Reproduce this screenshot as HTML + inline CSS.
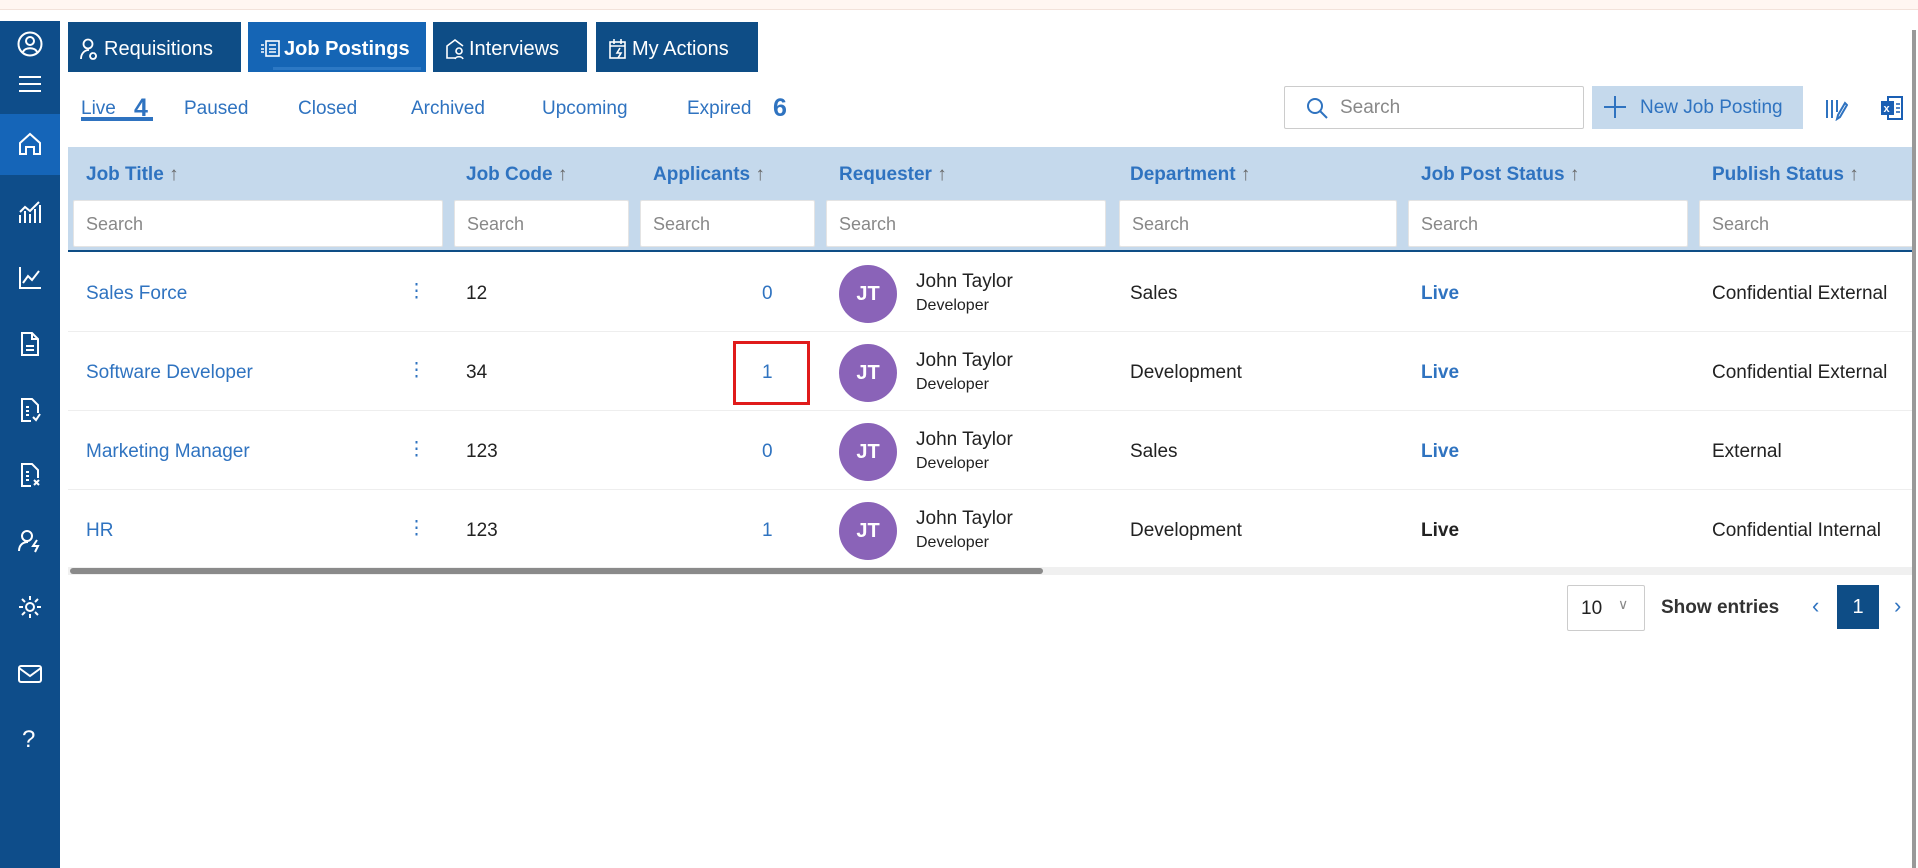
<!DOCTYPE html>
<html><head><meta charset="utf-8"><style>
*{box-sizing:border-box;margin:0;padding:0}
body{width:1918px;height:868px;overflow:hidden;background:#fff;font-family:"Liberation Sans",sans-serif;position:relative;color:#222}
.a{position:absolute}
.top{left:0;top:0;width:1918px;height:10px;background:#fff6f1;border-bottom:1px solid #f2e2da}
.side{left:0;top:21px;width:60px;height:847px;background:#0e4d8a}
.home{left:0;top:114px;width:60px;height:61px;background:#1565b8}
.ic{position:absolute;left:17px;width:26px;height:26px}
.tab{top:22px;height:50px;background:#0e4d86;color:#fff;font-size:20px;line-height:54px;padding-left:36px}
.tab svg{position:absolute;left:12px;top:16px}
.sub{top:98px;font-size:19px;color:#2f73c0}
.num{font-size:25px;font-weight:bold;color:#2f73c0;top:94px}
.band{left:68px;top:147px;width:1846px;height:105px;background:#c5d9ec;border-bottom:2px solid #0e4d86}
.hd{top:164px;font-size:19px;font-weight:bold;color:#2f73c0}
.hd span{color:#666;font-weight:normal}
.inp{top:200px;height:47px;background:#fff;border:1px solid #e4e4e4;border-radius:2px;font-size:18px;color:#888;padding:13px 12px}
.row{left:68px;width:1846px;border-bottom:1px solid #eee}
.c{font-size:19px}
.lk{color:#2f73c0}
.av{width:58px;height:58px;border-radius:50%;background:#8a63b8;color:#fff;font-weight:bold;font-size:20px;text-align:center;line-height:58px}
</style></head><body>
<div class="a top"></div>
<div class="a side"></div>
<div class="a home"></div>
<svg class="ic" style="top:31px" viewBox="0 0 26 26" fill="none" stroke="#fff" stroke-width="2"><circle cx="13" cy="13" r="11.5"/><circle cx="13" cy="10" r="4"/><path d="M6 21c2-5 12-5 14 0"/></svg>
<svg class="ic" style="top:72px" viewBox="0 0 26 26" stroke="#fff" stroke-width="2"><path d="M2 5h22M2 12h22M2 19h22"/></svg>
<svg class="ic" style="top:131px" viewBox="0 0 26 26" fill="none" stroke="#fff" stroke-width="2"><path d="M3 12L13 3l10 9v11h-6v-7h-8v7H3z"/></svg>
<svg class="ic" style="top:199px" viewBox="0 0 26 26" fill="none" stroke="#fff" stroke-width="2"><path d="M3 24V16M8 24V12M13 24V15M18 24V10M23 24V6M3 13l5-5 5 4 9-9"/></svg>
<svg class="ic" style="top:265px" viewBox="0 0 26 26" fill="none" stroke="#fff" stroke-width="2"><path d="M3 2v21h21M6 18l5-7 4 4 7-9"/></svg>
<svg class="ic" style="top:331px" viewBox="0 0 26 26" fill="none" stroke="#fff" stroke-width="2"><path d="M5 2h10l6 6v16H5zM15 2v6h6M9 15h8M9 19h8"/></svg>
<svg class="ic" style="top:397px" viewBox="0 0 26 26" fill="none" stroke="#fff" stroke-width="2"><path d="M14 24H5V2h10l6 6v8M9 10h3M9 14h3M9 18h3M16 20l3 3 4-6"/></svg>
<svg class="ic" style="top:462px" viewBox="0 0 26 26" fill="none" stroke="#fff" stroke-width="2"><path d="M14 24H5V2h10l6 6v8M9 10h3M9 14h3M9 18h3M17 18l5 5M22 18l-5 5"/></svg>
<svg class="ic" style="top:528px" viewBox="0 0 26 26" fill="none" stroke="#fff" stroke-width="2"><circle cx="10" cy="8" r="5"/><path d="M2 23c0-6 4-9 9-9M20 12l-4 6h5l-3 6"/></svg>
<svg class="ic" style="top:594px" viewBox="0 0 26 26" fill="none" stroke="#fff" stroke-width="2"><circle cx="13" cy="13" r="4"/><path d="M13 2v4M13 20v4M2 13h4M20 13h4M5 5l3 3M18 18l3 3M5 21l3-3M18 8l3-3"/></svg>
<svg class="ic" style="top:661px" viewBox="0 0 26 26" fill="none" stroke="#fff" stroke-width="2"><rect x="2" y="5" width="22" height="16" rx="2"/><path d="M2 7l11 8 11-8"/></svg>
<div class="a" style="left:22px;top:726px;color:#fff;font-size:24px">?</div>

<div class="a tab" style="left:68px;width:173px"><svg width="20" height="22" viewBox="0 0 20 22" fill="none" stroke="#fff" stroke-width="1.8"><circle cx="8" cy="6" r="4.5"/><path d="M1 21c0-6 4-9 8-9M13 15a3 3 0 1 0 .1 0"/></svg>Requisitions</div>
<div class="a tab" style="left:248px;width:178px;background:#1565b5;font-weight:bold"><svg width="20" height="22" viewBox="0 0 20 22" fill="none" stroke="#fff" stroke-width="1.6"><rect x="6" y="3" width="13" height="15"/><path d="M9 7h7M9 11h7M9 14h7M1 7h3M1 11h3M1 14h3"/></svg>Job Postings<div class="a" style="left:25px;right:5px;bottom:2px;height:3px;background:#2c78c4"></div></div>
<div class="a tab" style="left:433px;width:154px"><svg width="20" height="22" viewBox="0 0 20 22" fill="none" stroke="#fff" stroke-width="1.6"><path d="M2 20V8l8-6 8 6M2 8v12h8"/><circle cx="14" cy="13" r="3"/><path d="M10 21c1-3 7-3 8 0"/></svg>Interviews</div>
<div class="a tab" style="left:596px;width:162px"><svg width="20" height="22" viewBox="0 0 20 22" fill="none" stroke="#fff" stroke-width="1.6"><rect x="2" y="4" width="15" height="16"/><path d="M2 8h15M6 1v5M13 1v5M12 10l-3 5h4l-3 5"/></svg>My Actions</div>

<div class="a sub" style="left:81px">Live</div><div class="a num" style="left:134px">4</div>
<div class="a" style="left:81px;top:117px;width:72px;height:4px;background:#2f73c0"></div>
<div class="a sub" style="left:184px">Paused</div>
<div class="a sub" style="left:298px">Closed</div>
<div class="a sub" style="left:411px">Archived</div>
<div class="a sub" style="left:542px">Upcoming</div>
<div class="a sub" style="left:687px">Expired</div><div class="a num" style="left:773px">6</div>

<div class="a" style="left:1284px;top:86px;width:300px;height:43px;border:1px solid #ccc;border-radius:2px"></div>
<svg class="a" style="left:1305px;top:96px" width="24" height="24" viewBox="0 0 24 24" fill="none" stroke="#2f73c0" stroke-width="2"><circle cx="10" cy="10" r="7"/><path d="M15 15l7 7"/></svg>
<div class="a" style="left:1340px;top:97px;font-size:19px;color:#888">Search</div>
<div class="a" style="left:1592px;top:86px;width:211px;height:43px;background:#c5d9ec;color:#2f73c0;font-size:19px;line-height:43px;padding-left:48px">New Job Posting</div>
<svg class="a" style="left:1604px;top:96px" width="22" height="22" viewBox="0 0 22 22" stroke="#2f73c0" stroke-width="2"><path d="M11 0v22M0 11h22"/></svg>
<svg class="a" style="left:1824px;top:97px" width="24" height="24" viewBox="0 0 24 24" fill="none" stroke="#2f73c0" stroke-width="2"><path d="M3 3v18M8 3v18M13 3v12M21 6l-7 12-1 4 3-2 7-12z"/></svg>
<svg class="a" style="left:1880px;top:95px" width="24" height="26" viewBox="0 0 24 26"><rect x="8" y="2" width="14" height="22" fill="none" stroke="#1a5fb4" stroke-width="2"/><rect x="1" y="6" width="13" height="14" fill="#1a5fb4"/><text x="3.5" y="17" font-size="11" fill="#fff" font-family="Liberation Sans" font-weight="bold">x</text><path d="M16 9h4M16 13h4M16 17h4" stroke="#1a5fb4" stroke-width="1.5"/></svg>

<div class="a band"></div>
<div class="a hd" style="left:86px">Job Title <span>↑</span></div>
<div class="a hd" style="left:466px">Job Code <span>↑</span></div>
<div class="a hd" style="left:653px">Applicants <span>↑</span></div>
<div class="a hd" style="left:839px">Requester <span>↑</span></div>
<div class="a hd" style="left:1130px">Department <span>↑</span></div>
<div class="a hd" style="left:1421px">Job Post Status <span>↑</span></div>
<div class="a hd" style="left:1712px">Publish Status <span>↑</span></div>
<div class="a inp" style="left:73px;width:370px">Search</div>
<div class="a inp" style="left:454px;width:175px">Search</div>
<div class="a inp" style="left:640px;width:175px">Search</div>
<div class="a inp" style="left:826px;width:280px">Search</div>
<div class="a inp" style="left:1119px;width:278px">Search</div>
<div class="a inp" style="left:1408px;width:280px">Search</div>
<div class="a inp" style="left:1699px;width:215px">Search</div>

<div class="a row" style="top:253px;height:79px"></div>
<div class="a row" style="top:332px;height:79px"></div>
<div class="a row" style="top:411px;height:79px"></div>

<div class="a c lk" style="left:86px;top:283px">Sales Force</div>
<div class="a c lk" style="left:86px;top:362px">Software Developer</div>
<div class="a c lk" style="left:86px;top:441px">Marketing Manager</div>
<div class="a c lk" style="left:86px;top:520px">HR</div>
<div class="a c lk" style="left:407px;top:280px">⋮</div>
<div class="a c lk" style="left:407px;top:359px">⋮</div>
<div class="a c lk" style="left:407px;top:438px">⋮</div>
<div class="a c lk" style="left:407px;top:517px">⋮</div>
<div class="a c" style="left:466px;top:283px">12</div>
<div class="a c" style="left:466px;top:362px">34</div>
<div class="a c" style="left:466px;top:441px">123</div>
<div class="a c" style="left:466px;top:520px">123</div>
<div class="a c lk" style="left:762px;top:283px">0</div>
<div class="a c lk" style="left:762px;top:362px">1</div>
<div class="a c lk" style="left:762px;top:441px">0</div>
<div class="a c lk" style="left:762px;top:520px">1</div>
<div class="a" style="left:733px;top:341px;width:77px;height:64px;border:3px solid #e01b1b"></div>

<div class="a av" style="left:839px;top:265px">JT</div>
<div class="a av" style="left:839px;top:344px">JT</div>
<div class="a av" style="left:839px;top:423px">JT</div>
<div class="a av" style="left:839px;top:502px">JT</div>
<div class="a c" style="left:916px;top:271px">John Taylor</div><div class="a" style="left:916px;top:297px;font-size:16px">Developer</div>
<div class="a c" style="left:916px;top:350px">John Taylor</div><div class="a" style="left:916px;top:376px;font-size:16px">Developer</div>
<div class="a c" style="left:916px;top:429px">John Taylor</div><div class="a" style="left:916px;top:455px;font-size:16px">Developer</div>
<div class="a c" style="left:916px;top:508px">John Taylor</div><div class="a" style="left:916px;top:534px;font-size:16px">Developer</div>

<div class="a c" style="left:1130px;top:283px">Sales</div>
<div class="a c" style="left:1130px;top:362px">Development</div>
<div class="a c" style="left:1130px;top:441px">Sales</div>
<div class="a c" style="left:1130px;top:520px">Development</div>
<div class="a c lk" style="left:1421px;top:283px;font-weight:bold">Live</div>
<div class="a c lk" style="left:1421px;top:362px;font-weight:bold">Live</div>
<div class="a c lk" style="left:1421px;top:441px;font-weight:bold">Live</div>
<div class="a c" style="left:1421px;top:520px;font-weight:bold">Live</div>
<div class="a c" style="left:1712px;top:283px;width:200px;overflow:hidden;white-space:nowrap">Confidential External</div>
<div class="a c" style="left:1712px;top:362px;width:200px;overflow:hidden;white-space:nowrap">Confidential External</div>
<div class="a c" style="left:1712px;top:441px">External</div>
<div class="a c" style="left:1712px;top:520px;width:200px;overflow:hidden;white-space:nowrap">Confidential Internal</div>

<div class="a" style="left:68px;top:567px;width:1846px;height:8px;background:#f0f0f0"></div>
<div class="a" style="left:70px;top:568px;width:973px;height:6px;background:#8a8a8a;border-radius:3px"></div>
<div class="a" style="left:1912px;top:30px;width:4px;height:838px;background:#999"></div>

<div class="a" style="left:1567px;top:585px;width:78px;height:46px;border:1px solid #ccc;border-radius:2px;font-size:19px;padding:12px 13px">10</div>
<div class="a" style="left:1618px;top:596px;color:#888;font-size:14px">∨</div>
<div class="a" style="left:1661px;top:597px;font-size:19px;font-weight:bold;color:#333">Show entries</div>
<div class="a" style="left:1812px;top:593px;font-size:22px;color:#2f73c0">‹</div>
<div class="a" style="left:1837px;top:585px;width:42px;height:44px;background:#0e4d86;color:#fff;font-size:20px;text-align:center;line-height:44px">1</div>
<div class="a" style="left:1894px;top:593px;font-size:22px;color:#2f73c0">›</div>
</body></html>
